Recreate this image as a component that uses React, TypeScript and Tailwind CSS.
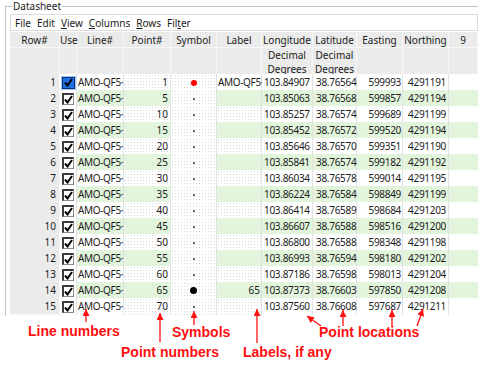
const cols = 'grid grid-cols-[50px_17px_47px_47px_46px_45px_51px_44px_46px_46px_29px]'
const dots = 'bg-white bg-[radial-gradient(circle,#dadada_0.6px,transparent_0.8px)] bg-[length:3px_3px]'

const rows: [number, number, string, string, string, string][] = [
  [1, 1, '103.84907', '38.76564', '599993', '4291191'],
  [2, 5, '103.85063', '38.76568', '599857', '4291194'],
  [3, 10, '103.85257', '38.76574', '599689', '4291199'],
  [4, 15, '103.85452', '38.76572', '599520', '4291194'],
  [5, 20, '103.85646', '38.76570', '599351', '4291190'],
  [6, 25, '103.85841', '38.76574', '599182', '4291192'],
  [7, 30, '103.86034', '38.76578', '599014', '4291195'],
  [8, 35, '103.86224', '38.76584', '598849', '4291199'],
  [9, 40, '103.86414', '38.76589', '598684', '4291203'],
  [10, 45, '103.86607', '38.76588', '598516', '4291200'],
  [11, 50, '103.86800', '38.76588', '598348', '4291198'],
  [12, 55, '103.86993', '38.76594', '598180', '4291202'],
  [13, 60, '103.87186', '38.76598', '598013', '4291204'],
  [14, 65, '103.87373', '38.76603', '597850', '4291208'],
  [15, 70, '103.87560', '38.76608', '597687', '4291211'],
]

function CheckBox({ active }: { active?: boolean }) {
  return (
    <span
      className={
        active
          ? 'w-[13px] h-[12px] flex items-center justify-center bg-[#1f6fe5] border border-[#0a2f6b] outline outline-1 outline-[#9cc7ff]'
          : 'w-[12px] h-[12px] flex items-center justify-center bg-white border border-[#8a8a8a] border-l-2 border-t-2 border-l-[#3c3c3c] border-t-[#3c3c3c]'
      }
    >
      <svg width="9" height="9" viewBox="0 0 9 9">
        <path d="M1 4.5 L3.5 7.5 L8 1" fill="none" stroke="#000" strokeWidth="2" />
      </svg>
    </span>
  )
}

function Symbol({ n }: { n: number }) {
  if (n === 1) return <span className="w-[6px] h-[6px] rounded-full bg-[#ff0000]" />
  if (n === 14) return <span className="w-[7px] h-[7px] rounded-full bg-black" />
  return <span className="w-[2px] h-[2px] rounded-full bg-[#333]" />
}

const notes = [
  { text: 'Line numbers', cls: 'left-[28px] top-[324px]' },
  { text: 'Symbols', cls: 'left-[172px] top-[325px]' },
  { text: 'Point numbers', cls: 'left-[121px] top-[345px]' },
  { text: 'Labels, if any', cls: 'left-[243px] top-[345px]' },
  { text: 'Point locations', cls: 'left-[319px] top-[325px]' },
]

const arrows = [
  [86, 322, 86, 309],
  [160, 342, 160, 313],
  [194, 325, 194, 311],
  [257, 343, 257, 309],
  [321, 326, 307, 316],
  [343, 326, 343, 310],
  [392, 327, 392, 310],
  [417, 326, 423, 309],
]

export default function App() {
  return (
    <div className="relative w-[500px] h-[365px] bg-white overflow-hidden text-[10px] text-[#1a1a1a] font-['Noto_Sans',sans-serif]">
      {/* group frame */}
      <div className="relative ml-[5px] mt-[6px] w-[473px] border-l border-t border-[#c4c4c4] pl-[4px] pt-[7px] pb-[2px]">
        <span className="absolute left-[6px] top-[-8px] bg-white px-[1px] leading-[14px]">Datasheet</span>

        {/* menu */}
        <div className="h-[17px] border border-[#dcdcdc] bg-white flex items-center pl-[4px] gap-[6px] leading-none">
          <span>File</span>
          <span>Edit</span>
          <span><u>V</u>iew</span>
          <span><u>C</u>olumns</span>
          <span><u>R</u>ows</span>
          <span>Fil<u>t</u>er</span>
        </div>

        {/* header */}
        <div className={`${cols} mt-[1px] bg-[#ebebeb] h-[16px] leading-[16px] text-center border-b border-[#f7f7f7]`}>
          {['Row#', 'Use', 'Line#', 'Point#', 'Symbol', 'Label', 'Longitude', 'Latitude', 'Easting', 'Northing', '9'].map(h => (
            <div key={h} className="border-r border-[#f7f7f7] whitespace-nowrap">{h}</div>
          ))}
        </div>
        <div className={`${cols} bg-[#ebebeb] h-[26px] text-center`}>
          {Array.from({ length: 11 }).map((_, i) => (
            <div key={i} className="border-r border-[#f7f7f7] flex flex-col justify-center leading-[14px] overflow-visible">
              {(i === 6 || i === 7) && (
                <>
                  <span>Decimal</span>
                  <span>Degrees</span>
                </>
              )}
            </div>
          ))}
        </div>

        {/* body */}
        {rows.map(([n, pt, lon, lat, e, no]) => {
          const green = n % 2 === 0
          const bg = green ? 'bg-[#e2f5dc]' : 'bg-white'
          const dot = green ? bg : dots
          return (
            <div key={n} className={`${cols} h-[16px] leading-[16px] whitespace-nowrap`}>
              <div className="bg-[#ebebeb] border-r border-b border-[#f7f7f7] text-right pr-[3px]">{n}</div>
              <div className="bg-white border-r border-[#e2e2e2] flex items-center justify-center">
                <CheckBox active={n === 1} />
              </div>
              <div className={`${bg} border-r border-[#e2e2e2] pl-[1px] tracking-[-0.35px]`}>AMO-QF5·</div>
              <div className={`${dot} border-r border-[#e2e2e2] text-right pr-[2px]`}>{pt}</div>
              <div className={`${dots} border-r border-[#e2e2e2] flex items-center justify-center`}>
                <Symbol n={n} />
              </div>
              <div className={`${n === 1 ? 'bg-white' : dot} border-r border-[#e2e2e2] ${n === 14 ? 'text-right pr-[1px]' : 'pl-[1px] tracking-[-0.35px]'}`}>
                {n === 1 ? 'AMO-QF5·' : n === 14 ? '65' : ''}
              </div>
              <div className={`${bg} border-r border-[#e2e2e2] pl-[2px] tracking-[-0.3px]`}>{lon}</div>
              <div className={`${bg} border-r border-[#e2e2e2] pl-[3px] tracking-[-0.3px]`}>{lat}</div>
              <div className={`${bg} border-r border-[#e2e2e2] text-right pr-[1px] tracking-[-0.3px]`}>{e}</div>
              <div className={`${bg} border-r border-[#e2e2e2] text-right pr-[2px] tracking-[-0.3px]`}>{no}</div>
              <div className={bg} />
            </div>
          )
        })}
      </div>

      {/* annotations */}
      <svg className="absolute left-0 top-0 pointer-events-none" width="500" height="365">
        <defs>
          <marker id="ah" markerUnits="userSpaceOnUse" markerWidth="8" markerHeight="8" refX="7" refY="3.5" orient="auto">
            <path d="M0 0 L7 3.5 L0 7 Z" fill="#ff1010" />
          </marker>
        </defs>
        {arrows.map(([x1, y1, x2, y2], i) => (
          <line key={i} x1={x1} y1={y1} x2={x2} y2={y2} stroke="#ff1010" strokeWidth="1.3" markerEnd="url(#ah)" />
        ))}
      </svg>
      {notes.map(n => (
        <span
          key={n.text}
          className={`absolute ${n.cls} text-[14px] leading-none font-bold text-[#ff1010] whitespace-nowrap font-['Liberation_Sans',Arial,sans-serif]`}
        >
          {n.text}
        </span>
      ))}
    </div>
  )
}
